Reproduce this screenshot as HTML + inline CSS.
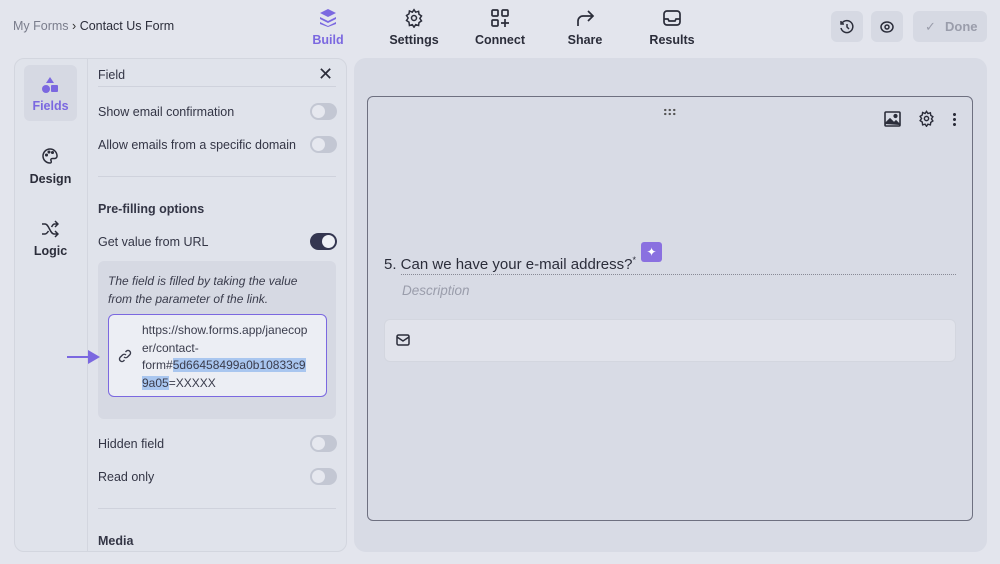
<!DOCTYPE html>
<html><head><meta charset="utf-8"><style>
*{box-sizing:border-box;margin:0;padding:0}
body{width:1000px;height:564px;background:#e3e5ed;font-family:"Liberation Sans",sans-serif;color:#2b2d3a;position:relative;overflow:hidden;font-size:13px}
.abs{position:absolute}
.nav{position:absolute;top:8px;text-align:center;font-size:12.5px;font-weight:bold;color:#2b2d3a}
.nav svg{display:block;margin:0 auto 5px}
.tog{position:absolute;width:27px;height:17px;border-radius:9px;background:#c3c7d3}
.tog::after{content:"";position:absolute;left:2px;top:2px;width:13px;height:13px;border-radius:50%;background:#e6e8ef}
.tog.on{background:#343650}
.tog.on::after{left:12px;background:#eef0f5}
.lbl{position:absolute;left:98px;font-size:12.5px;color:#333545}
.hr{position:absolute;left:98px;width:238px;height:1px;background:#cfd2dc}
</style></head><body>
<div class="abs" style="left:13px;top:19px;font-size:12.5px;color:#7a7d8c">My Forms <span style="color:#333">›</span> <span style="color:#2b2d3a">Contact Us Form</span></div>

<div class="nav" style="left:308px;width:40px;color:#7b68e0"><svg width="20" height="20" viewBox="0 0 20 20" fill="#7b68e0"><path d="M10 1l8 4-8 4-8-4z"/><path d="M2 9l8 4 8-4v2l-8 4-8-4z"/><path d="M2 14l8 4 8-4v2l-8 3-8-3z"/></svg>Build</div>
<div class="nav" style="left:388px;width:52px"><svg width="20" height="20" viewBox="0 0 24 24" fill="none" stroke="#2b2d3a" stroke-width="1.8"><circle cx="12" cy="12" r="3"/><path d="M12 2l2 3 3.5-1 .5 3.5 3 2-2 3 2 3-3 2-.5 3.5-3.5-1-2 3-2-3-3.5 1L6 17l-3-2 2-3-2-3 3-2 .5-3.5L10 5z"/></svg>Settings</div>
<div class="nav" style="left:474px;width:52px"><svg width="20" height="20" viewBox="0 0 20 20" fill="none" stroke="#2b2d3a" stroke-width="1.7"><rect x="2" y="2" width="6" height="6" rx="1"/><rect x="12" y="2" width="6" height="6" rx="1"/><rect x="2" y="12" width="6" height="6" rx="1"/><path d="M15 11v8M11 15h8"/></svg>Connect</div>
<div class="nav" style="left:562px;width:46px"><svg width="20" height="20" viewBox="0 0 20 20" fill="none" stroke="#2b2d3a" stroke-width="1.7"><path d="M3 18v-5a5 5 0 0 1 5-5h10M13 3l5 5-5 5"/></svg>Share</div>
<div class="nav" style="left:648px;width:48px"><svg width="20" height="20" viewBox="0 0 20 20" fill="none" stroke="#2b2d3a" stroke-width="1.7"><rect x="2" y="3" width="16" height="14" rx="3"/><path d="M2 11h4l1 2h6l1-2h4"/></svg>Results</div>

<div class="abs" style="left:831px;top:11px;width:32px;height:31px;border-radius:6px;background:#d6d9e3"><svg class="abs" style="left:8px;top:8px" width="16" height="16" viewBox="0 0 16 16" fill="none" stroke="#2b2d3a" stroke-width="1.5"><path d="M3 4a6 6 0 1 1-1 5M2 2v3h3M8 5v3l2 2"/></svg></div>
<div class="abs" style="left:871px;top:11px;width:32px;height:31px;border-radius:6px;background:#d6d9e3"><svg class="abs" style="left:8px;top:8px" width="16" height="16" viewBox="0 0 16 16" fill="none" stroke="#2b2d3a" stroke-width="1.5"><ellipse cx="8" cy="8" rx="6" ry="5"/><circle cx="8" cy="8" r="2"/></svg></div>
<div class="abs" style="left:913px;top:11px;width:74px;height:31px;border-radius:6px;background:#d6d9e3;color:#9a9dab;font-size:13px;font-weight:bold;line-height:31px;padding-left:32px">Done<span class="abs" style="left:12px;top:0;font-weight:normal">✓</span></div>

<!-- left panel -->
<div class="abs" style="left:14px;top:58px;width:333px;height:494px;border:1px solid #d3d6df;border-radius:10px;background:#e0e3eb"></div>
<div class="abs" style="left:87px;top:59px;width:1px;height:492px;background:#d3d6df"></div>
<div class="abs" style="left:24px;top:65px;width:53px;height:56px;border-radius:6px;background:#d6d9e3"></div>
<svg class="abs" style="left:41px;top:76px" width="18" height="18" viewBox="0 0 18 18" fill="#7b68e0"><path d="M9 1l4 6H5z"/><circle cx="5" cy="13" r="4"/><rect x="10" y="9" width="7" height="7" rx="1"/></svg>
<div class="abs" style="left:24px;top:99px;width:53px;text-align:center;font-size:12.5px;font-weight:bold;color:#7b68e0">Fields</div>
<svg class="abs" style="left:41px;top:147px" width="18" height="18" viewBox="0 0 18 18" fill="none" stroke="#2b2d3a" stroke-width="1.5"><path d="M9 2a7 7 0 1 0 0 14c1.5 0 1.5-1.5 1-2.5s0-2 1.5-2H14a2.5 2.5 0 0 0 2-3A7 7 0 0 0 9 2z"/><circle cx="5.5" cy="8" r=".8"/><circle cx="8" cy="5" r=".8"/><circle cx="11.5" cy="5.5" r=".8"/></svg>
<div class="abs" style="left:24px;top:172px;width:53px;text-align:center;font-size:12.5px;font-weight:bold">Design</div>
<svg class="abs" style="left:41px;top:220px" width="18" height="18" viewBox="0 0 18 18" fill="none" stroke="#2b2d3a" stroke-width="1.5"><path d="M1 4h3c4 0 5 10 9 10h3M1 14h3c1.5 0 2.5-1.5 3.5-3M10.5 7c1-1.5 1.5-3 3-3h3M14 1l3 3-3 3M14 11l3 3-3 3"/></svg>
<div class="abs" style="left:24px;top:244px;width:53px;text-align:center;font-size:12.5px;font-weight:bold">Logic</div>

<div class="lbl" style="top:68px">Field</div>
<div class="abs" style="left:318px;top:64px;font-size:18px">✕</div>
<div class="hr" style="top:86px"></div>
<div class="lbl" style="top:105px">Show email confirmation</div><div class="tog" style="left:310px;top:103px"></div>
<div class="lbl" style="top:138px">Allow emails from a specific domain</div><div class="tog" style="left:310px;top:136px"></div>
<div class="hr" style="top:176px"></div>
<div class="lbl" style="top:202px;font-weight:bold">Pre-filling options</div>
<div class="lbl" style="top:235px">Get value from URL</div><div class="tog on" style="left:310px;top:233px"></div>
<div class="abs" style="left:98px;top:261px;width:238px;height:158px;border-radius:6px;background:#d6d9e3"></div>
<div class="abs" style="left:108px;top:272px;font-size:12px;font-style:italic;line-height:18px;color:#3a3c4c">The field is filled by taking the value<br>from the parameter of the link.</div>
<div class="abs" style="left:108px;top:314px;width:219px;height:83px;border:1.5px solid #7b68e0;border-radius:6px;background:#eceef4"></div>
<svg class="abs" style="left:118px;top:349px" width="14" height="14" viewBox="0 0 14 14" fill="none" stroke="#3a3c4c" stroke-width="1.4"><path d="M6 8a2.5 2.5 0 0 0 3.5 0l2.5-2.5a2.5 2.5 0 0 0-3.5-3.5L7.5 3M8 6a2.5 2.5 0 0 0-3.5 0L2 8.5A2.5 2.5 0 0 0 5.5 12l1-1"/></svg>
<div class="abs" style="left:142px;top:322px;font-size:12px;line-height:17.5px;color:#3a3c4c;width:182px">https://show.forms.app/janecop<br>er/contact-<br>form#<span style="background:#a9c6ef">5d66458499a0b10833c9</span><br><span style="background:#a9c6ef">9a05</span>=XXXXX</div>
<svg class="abs" style="left:66px;top:349px" width="36" height="16" viewBox="0 0 36 16"><path d="M1 8h22" stroke="#7b68e0" stroke-width="2"/><path d="M22 1l12 7-12 7z" fill="#7b68e0"/></svg>
<div class="lbl" style="top:437px">Hidden field</div><div class="tog" style="left:310px;top:435px"></div>
<div class="lbl" style="top:470px">Read only</div><div class="tog" style="left:310px;top:468px"></div>
<div class="hr" style="top:508px"></div>
<div class="lbl" style="top:534px;font-weight:bold">Media</div>

<!-- canvas -->
<div class="abs" style="left:354px;top:58px;width:633px;height:494px;border-radius:12px;background:#d8dbe5"></div>
<div class="abs" style="left:367px;top:96px;width:606px;height:425px;border:1.3px solid #6e7080;border-radius:6px;background:#d8dbe5"></div>
<div class="abs" style="left:663px;top:108px;width:13px;height:8px;background:radial-gradient(circle,#555 1.1px,transparent 1.3px) 0 0/4.5px 4px"></div>
<svg class="abs" style="left:884px;top:111px" width="17" height="16" viewBox="0 0 17 16" fill="none" stroke="#2b2d3a" stroke-width="1.6"><rect x="1" y="1" width="15" height="14" rx="1"/><path d="M1 13l5-5 4 4 2-2 4 4" fill="#2b2d3a"/><circle cx="11.5" cy="5" r="1.3" fill="#2b2d3a"/></svg>
<svg class="abs" style="left:918px;top:110px" width="17" height="17" viewBox="0 0 24 24" fill="none" stroke="#2b2d3a" stroke-width="2"><circle cx="12" cy="12" r="3"/><path d="M12 2l2 3 3.5-1 .5 3.5 3 2-2 3 2 3-3 2-.5 3.5-3.5-1-2 3-2-3-3.5 1L6 17l-3-2 2-3-2-3 3-2 .5-3.5L10 5z"/></svg>
<div class="abs" style="left:953px;top:112px;width:3px;height:14px;background:radial-gradient(circle,#2b2d3a 1.4px,transparent 1.6px) 0 0/3px 5px"></div>
<div class="abs" style="left:384px;top:255px;font-size:15px;color:#2b2d3a">5. Can we have your e-mail address?<sup style="font-size:9px">*</sup></div>
<div class="abs" style="left:641px;top:242px;width:21px;height:20px;border-radius:3px;background:#8a70e0;color:#fff;font-size:12px;text-align:center;line-height:20px">✦</div>
<div class="abs" style="left:401px;top:274px;width:555px;border-top:1.5px dotted #888a96"></div>
<div class="abs" style="left:402px;top:283px;font-size:13.5px;font-style:italic;color:#9a9dab">Description</div>
<div class="abs" style="left:384px;top:319px;width:572px;height:43px;border-radius:6px;background:#e1e3eb;border:1px solid #d3d6df"></div>
<svg class="abs" style="left:396px;top:334px" width="14" height="12" viewBox="0 0 14 12" fill="none" stroke="#2b2d3a" stroke-width="1.5"><rect x="1" y="1" width="12" height="10" rx="1.5"/><path d="M1 3l6 4 6-4"/></svg>
</body></html>
